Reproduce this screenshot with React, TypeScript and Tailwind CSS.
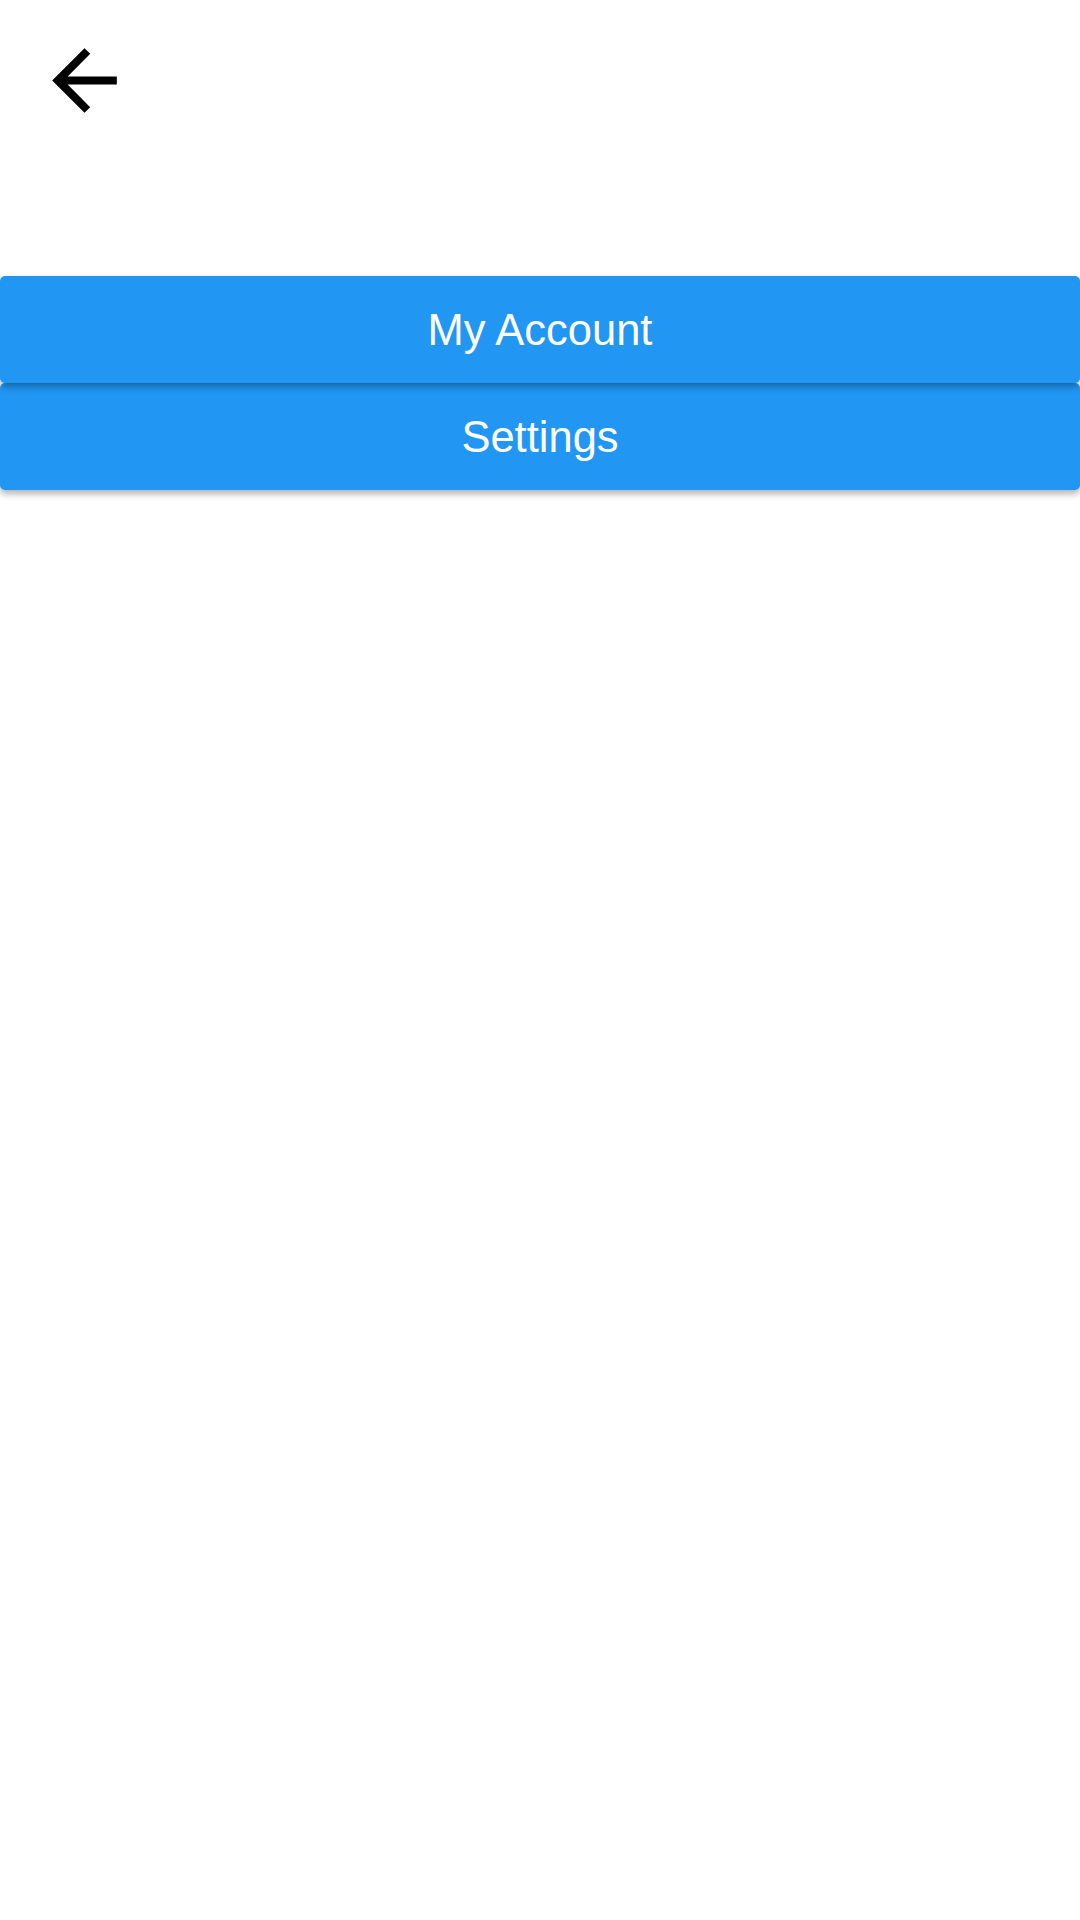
import React from "react";

/* Material "arrow_back" glyph */
function BackArrow() {
  return (
    <svg viewBox="0 0 24 24" className="w-[97px] h-[97px]" fill="#000" aria-hidden>
      <path d="M20 11H7.83l5.59-5.59L12 4l-8 8 8 8 1.41-1.41L7.83 13H20v-2z" />
    </svg>
  );
}

const items = ["My Account", "Settings"];

export default function App() {
  return (
    <div className="w-[1080px] h-[1920px] bg-white font-['Liberation_Sans',Arial,sans-serif]">
      {/* Top bar */}
      <div className="h-[276px] pt-[32px] pl-[36px]">
        <button className="block">
          <BackArrow />
        </button>
      </div>

      {/* Menu buttons */}
      <div className="flex flex-col">
        {items.map((label, i) => (
          <button
            key={label}
            className={`relative h-[107px] w-full rounded-[5px] bg-[#2196F3] text-white text-[43.5px] leading-none pt-[2px] shadow-[0_4px_7px_rgba(0,0,0,0.3)] ${
              i === 0 ? "z-10" : "z-0"
            }`}
          >
            {label}
          </button>
        ))}
      </div>
    </div>
  );
}
